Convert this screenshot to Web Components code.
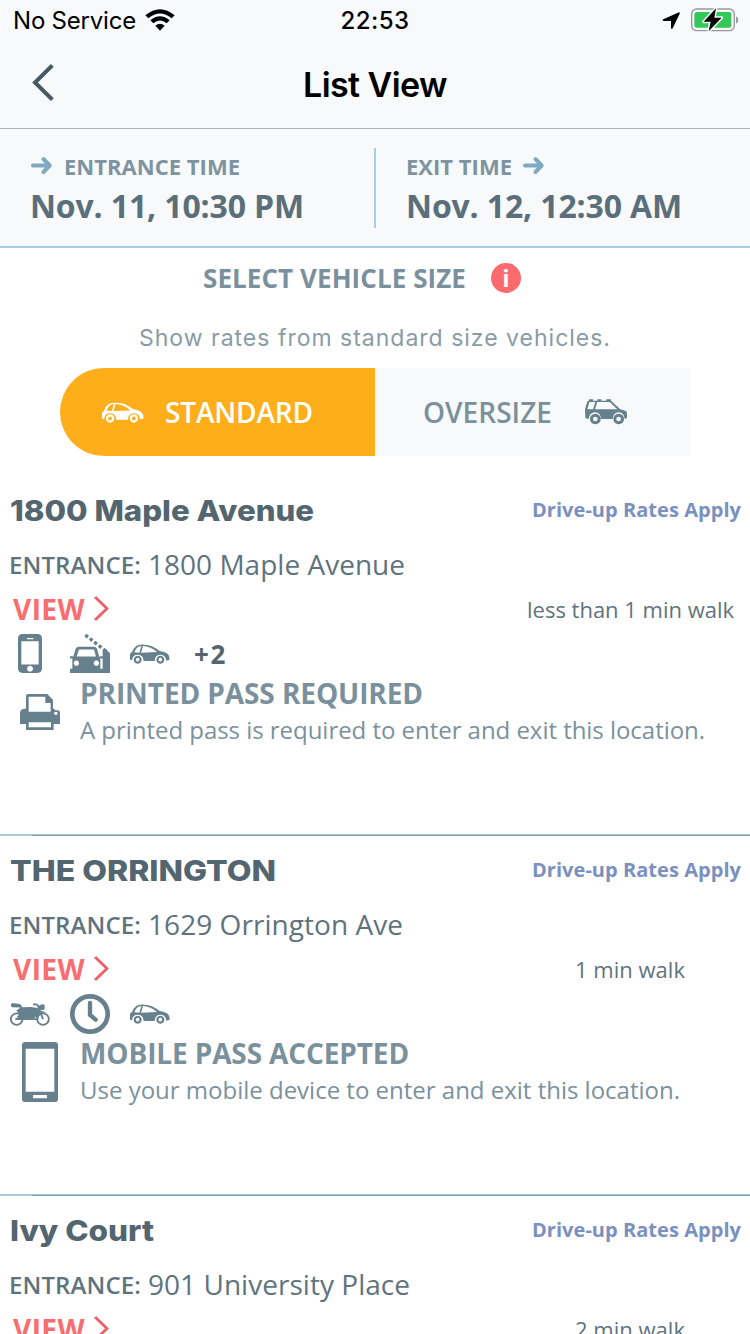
<!DOCTYPE html>
<html lang="en">
<head>
<meta charset="utf-8">
<title>List View</title>
<style>
html,body{margin:0;height:1334px;overflow:hidden;background:#fff}
</style>
</head>
<body>
<parking-app></parking-app>
<script>
const define = (name, html, setup) => customElements.define(name, class extends HTMLElement {
  connectedCallback() {
    if (this.shadowRoot) return;
    const root = this.attachShadow({ mode: 'open' });
    const t = document.createElement('template');
    t.innerHTML = typeof html === 'function' ? html(this) : html;
    root.append(t.content.cloneNode(true));
    if (setup) setup(this, root);
  }
});

/* Text tracked (or, with "stretch", widened) to a given advance width */
define('fit-text', `<style>:host{display:block;white-space:pre;flex:none}span{display:inline-block;transform-origin:0 50%}</style><span><slot></slot></span>`,
  (el, root) => {
    const w = +el.getAttribute('w');
    if (!w || !el.textContent) return;
    const span = root.querySelector('span');
    const natural = span.getBoundingClientRect().width;
    if (el.hasAttribute('stretch')) {
      span.style.transform = `scaleX(${(w / natural).toFixed(4)})`;
      el.style.width = w + 'px';
    } else {
      span.style.letterSpacing = ((w - natural) / el.textContent.length).toFixed(3) + 'px';
    }
  });

const car = `<path fill-rule="evenodd" d="M0 30Q3 26 6 24Q10 13 19 6Q29 1 43 2Q69 3 89 21Q106 23 114 31Q119 36 119 47L109 50Q107 32 91 32Q75 32 74 51L41 51Q40 32 23 32Q7 32 6 49L0 47Z
M13 25L28 26L34 6Q20 6 13 25ZM39 6L33 26L81 24Q62 7 39 6Z"/><path fill-rule="evenodd" d="M23 35a12 12 0 1 0 .1 0ZM23 41.500a5.500 5.500 0 1 1-.1 0ZM91 35a12 12 0 1 0 .1 0ZM91 41.500a5.500 5.500 0 1 1-.1 0Z"/>`;
const icons = {
  wifi: ['0 0 90 66', `<path d="M1 19Q45-17 89 19L80 28Q45-1 10 28ZM16 34Q45 9 74 34L65 43Q45 26 25 43ZM31 50Q45 39 59 50L45 65Z"/>`],
  location: ['0 0 54 54', `<path d="M51 1Q54 1 53 5L32 49Q29 54 27 48V27H5Q-1 25 4 22Z"/>`],
  battery: ['0 0 144 72', `<rect x="2" y="3" width="128" height="65" rx="15" fill="none" stroke="#98999c" stroke-width="4"/><path fill="#98999c" d="M135 25Q142 29 142 36T135 47Z"/><rect x="10" y="12" width="111" height="47" rx="8" fill="#34c759"/><path fill="#000" stroke="#f8f9fb" stroke-width="9" stroke-linejoin="round" paint-order="stroke" d="M75 1L38 41H59L53 70L92 29H70Z"/>`],
  back: ['0 0 66 112', `<path fill="none" stroke="#475963" stroke-width="12" d="M61 4L9 56L61 108"/>`],
  next: ['0 0 44 76', `<path fill="none" stroke="#f0606a" stroke-width="8.500" d="M3 3L38 38L3 73"/>`],
  arrow: ['0 0 64 50', `<path fill="none" stroke="#7ea9c1" stroke-width="12" stroke-linecap="round" stroke-linejoin="round" d="M6 25H56M38 6L57 25L38 44"/>`],
  car: ['0 0 120 60', car],
  suv: ['0 0 126 78', `<path fill-rule="evenodd" d="M0 31L7 7Q10 6 12 5V1H24V5H37V1H49V5H64V1H78V5L106 31L121 35Q126 37 126 44V57L119 60Q117 40 101 40Q85 40 83 60H48Q47 40 30 40Q14 40 11 60L1 58ZM7 31H24L31 9H13ZM30 31H50V31H97L74 9H37Z"/><path fill-rule="evenodd" d="M31 44a16 16 0 1 0 .1 0ZM31 53a7 7 0 1 1-.1 0ZM101 44a16 16 0 1 0 .1 0ZM101 53a7 7 0 1 1-.1 0Z"/>`],
  phone: ['0 0 72 118', `<path fill-rule="evenodd" d="M14 0H58Q72 0 72 14V104Q72 118 58 118H14Q0 118 0 104V14Q0 0 14 0ZM10 22V92H62V22ZM36 96a9 9 0 1 0 .1 0ZM27 12V16H46V12Z"/>`],
  gate: ['0 0 120 116', `<path fill-rule="evenodd" d="M26 38H72Q78 38 81 44L88 68Q91 72 91 78V116H75V106H23V116H7V78Q6 71 10 67L17 44Q20 38 26 38ZM27 46L20 67H78L72 46ZM19 79a8 8 0 1 0 .1 0ZM79 79a8 8 0 1 0 .1 0Z"/><path d="M0 66H9V73H0ZM89 66H98V73H89ZM0 103H120V116H0ZM98 51L108 45L120 57V116H98Z"/><path fill="none" stroke="currentColor" stroke-width="10" stroke-dasharray="10 7" d="M46 3L112 54"/>`],
  printer: ['0 0 120 108', `<path fill-rule="evenodd" d="M26 0H82L99 18V44H104V49H114Q120 50 120 57V90H101V108H18V90H0V57Q0 46 12 44H18V7Q18 0 26 0ZM26 8V53H92V27H76V8ZM26 85V100H93V85ZM103 54V62H112V54Z"/>`],
  moto: ['0 0 120 70', `<g fill="none" stroke="currentColor" stroke-width="5.500"><circle cx="20" cy="49" r="17.500"/><circle cx="99" cy="49" r="17.500"/><path d="M69 4H79Q84 5 86 15L99 49M20 49H82L88 21"/></g><path d="M3 4Q4 0 12 1L29 3Q35 5 37 13L64 12L89 17L81 34L73 48H30L20 43L28 34L19 23L32 14L6 13Q2 11 3 4ZM84 10L96 4L104 5V20L92 22ZM16 46L38 42V51L16 52ZM76 34Q94 16 108 31L98 29Q85 32 79 48Z"/>`],
  clock: ['0 0 120 120', `<circle cx="60" cy="60" r="53" fill="none" stroke="currentColor" stroke-width="14"/><path d="M60 27V63L77 77" fill="none" stroke="currentColor" stroke-width="13" stroke-linecap="round"/>`],
  mobile: ['0 0 108 180', `<path fill-rule="evenodd" d="M10 0H98Q108 0 108 10V170Q108 180 98 180H10Q0 180 0 170V10Q0 0 10 0ZM11 20V149H97V20ZM33 159V169H75V159Z"/>`]
};
define('app-icon', el => {
  const [box, art] = icons[el.getAttribute('name')];
  return `<style>:host{display:block;flex:none}svg{display:block;width:100%;height:100%;fill:currentColor;overflow:visible}</style><svg viewBox="${box}" preserveAspectRatio="none">${art}</svg>`;
});

define('status-bar', `<style>
:host{display:grid;grid-template-columns:1fr auto 1fr;align-items:center;height:40px;line-height:42px;font-family:Inter,sans-serif;font-size:24px;color:#000}
.left{display:flex;align-items:center;padding-left:13px;gap:9px;height:40px}
.right{display:flex;align-items:center;justify-content:flex-end;padding-right:11px;gap:11px;height:40px}
.clock{font-weight:500;height:40px}
.left fit-text{height:40px}
</style>
<div class="left"><fit-text w="123">No Service</fit-text><app-icon name="wifi" style="width:30px;height:22px"></app-icon></div>
<fit-text class="clock" w="69">22:53</fit-text>
<div class="right"><app-icon name="location" style="width:18px;height:18px;margin-top:1px"></app-icon><app-icon name="battery" style="width:48px;height:24px"></app-icon></div>`);

define('nav-bar', el => `<style>
:host{display:grid;grid-template-columns:1fr auto 1fr;align-items:center;height:88px;border-bottom:1px solid #aeb0b2;font:600 34px/88px Inter,sans-serif;color:#000}
app-icon{width:22px;height:37px;margin-left:32px;margin-top:-3px}
fit-text{height:87px}
</style><app-icon name="back"></app-icon><fit-text w="144">${el.getAttribute('heading')}</fit-text><span></span>`);

define('time-slot', el => `<style>
:host{display:block}
.label{display:flex;align-items:center;height:30px;font-size:22px;line-height:30px;font-weight:700;color:#7d94a0}
.date{font-size:32px;font-weight:700;line-height:50px;color:#5b6f7b}
app-icon{width:21px;height:17px;margin-top:-2px}
.before{margin-right:12px;margin-left:1px}.after{margin-left:11px}
</style>
<div class="label">${el.hasAttribute('exit') ? '' : '<app-icon class="before" name="arrow"></app-icon>'}<fit-text w="${el.getAttribute('lw')}">${el.getAttribute('label')}</fit-text>${el.hasAttribute('exit') ? '<app-icon class="after" name="arrow"></app-icon>' : ''}</div>
<fit-text class="date" w="${el.getAttribute('dw')}">${el.getAttribute('date')}</fit-text>`);

define('time-range', `<style>
:host{display:grid;grid-template-columns:374px 2px 374px;height:117px;border-bottom:2px solid #a9cfe4}
time-slot{padding:22px 0 0 30px}
time-slot[exit]{padding-left:30px}
i{height:80px;margin-top:19px;background:#a9cfe4}
</style>
<time-slot label="ENTRANCE TIME" lw="176" date="Nov. 11, 10:30 PM" dw="274"></time-slot><i></i>
<time-slot exit label="EXIT TIME" lw="106" date="Nov. 12, 12:30 AM" dw="276"></time-slot>`);

define('vehicle-size', `<style>
:host{display:block}
.head{display:flex;align-items:center;height:60px;padding-left:203px;gap:23px;font-size:26px;font-weight:700;color:#7a919d}
.info{display:grid;place-items:center;width:30px;height:30px;margin-left:2px;border-radius:50%;background:#fb6b6e;color:#fff;font:700 24px/30px "Open Sans",sans-serif}
.sub{display:flex;justify-content:center;height:60px;font:400 23px/60px Inter,sans-serif;color:#879ca7}
.toggle{display:grid;grid-template-columns:1fr 1fr;height:88px;margin:0 60px;font-size:28px;font-weight:600}
.toggle div{display:flex;align-items:center}
.standard{background:#ffae1b;color:#fff;border-radius:44px 0 0 44px;padding-left:42px;gap:21px}
.oversize{background:#f8f9fb;color:#7a919d;padding-left:48px;gap:33px}
.oversize app-icon{color:#66808d}
</style>
<div class="head"><fit-text w="263">SELECT VEHICLE SIZE</fit-text><span class="info">i</span></div>
<div class="sub"><fit-text w="472">Show rates from standard size vehicles.</fit-text></div>
<div class="toggle">
<div class="standard"><app-icon name="car" style="width:42px;height:21px"></app-icon><fit-text w="148">STANDARD</fit-text></div>
<div class="oversize"><fit-text w="129">OVERSIZE</fit-text><app-icon name="suv" style="width:42px;height:26px"></app-icon></div>
</div>`);

define('location-card', el => {
  const a = n => el.getAttribute(n);
  return `<style>
:host{display:block;box-sizing:border-box;height:360px;color:#5f737e}
.row{display:flex;justify-content:space-between;align-items:center}
.title{height:68px;padding:0 9px 0 10px}
.name{font:800 29px/68px Inter,sans-serif;color:#53656f;padding-top:2px}
.rate{font-size:20px;font-weight:700;color:#7a90c0;margin-top:-2px}
.entrance{height:42px;justify-content:flex-start;padding-left:9px;line-height:42px}
.entrance .key{font-size:24px;font-weight:600;margin-right:7px}
.entrance .value{font-size:28px;margin-top:-3px}
.view{height:46px;padding-left:13px}
.view .link{display:flex;align-items:center;gap:9px;font-size:28px;font-weight:700;line-height:46px;color:#f76d72}
.link app-icon{width:15px;height:25px;margin-top:-1px}
.walk{font-size:22px}
.features{display:flex;align-items:center;height:44px;padding-left:10px;gap:20px;color:#66808d}
.pass{display:grid;grid-template-columns:80px 1fr;color:#66808d}
.kind{font-size:28px;font-weight:700;line-height:34px;color:#7a919d}
.desc{font-size:24px;line-height:40px;color:#7a919d}
hr{margin:84px 0 0;border:0;height:2px;background:linear-gradient(#a9cfda,#a9cfda) 0 0/32px 2px no-repeat,linear-gradient(#a9c9d3 1px,#7c9fb0 1px)}
</style>
<div class="row title"><fit-text class="name" stretch w="${a('nw')}">${a('name')}</fit-text><fit-text class="rate" w="209">Drive-up Rates Apply</fit-text></div>
<div class="row entrance"><fit-text class="key" w="132">ENTRANCE:</fit-text><fit-text class="value" w="${a('aw')}">${a('address')}</fit-text></div>
<div class="row view"><div class="link"><fit-text w="72">VIEW</fit-text><app-icon name="next"></app-icon></div><fit-text class="walk" w="${a('ww')}" style="margin-right:${a('wr')}px">${a('walk')}</fit-text></div>
${a('kind') ? `<div class="features"><slot name="feature"></slot></div>
<div class="pass"><slot name="pass"></slot><div><fit-text class="kind" w="${a('kw')}">${a('kind')}</fit-text><fit-text class="desc" w="${a('dw')}">${a('desc')}</fit-text></div></div>
<hr>` : ''}`;
});

define('parking-app', `<style>
:host{display:block;width:750px;height:1334px;overflow:hidden;background:#fff;font-family:"Open Sans",sans-serif}
header{background:#f8f9fb}
main{padding-top:20px}
.plus{font-size:26px;font-weight:700;line-height:44px;color:#53656f;margin-left:4px}
</style>
<header><status-bar></status-bar><nav-bar heading="List View"></nav-bar><time-range></time-range></header>
<vehicle-size></vehicle-size>
<main>
<location-card name="1800 Maple Avenue" nw="304" address="1800 Maple Avenue" aw="257" walk="less than 1 min walk" ww="207" wr="16" kind="PRINTED PASS REQUIRED" kw="343" desc="A printed pass is required to enter and exit this location." dw="625">
<app-icon slot="feature" name="phone" style="width:24px;height:39px;margin:-1px 8px 0"></app-icon>
<app-icon slot="feature" name="gate" style="width:40px;height:39px;margin-top:-2px"></app-icon>
<app-icon slot="feature" name="car" style="width:40px;height:20px"></app-icon>
<fit-text slot="feature" class="plus" w="33">+2</fit-text>
<app-icon slot="pass" name="printer" style="width:40px;height:36px;margin:18px 0 0 20px"></app-icon>
</location-card>
<location-card name="THE ORRINGTON" nw="266" address="1629 Orrington Ave" aw="255" walk="1 min walk" ww="110" wr="65" kind="MOBILE PASS ACCEPTED" kw="329" desc="Use your mobile device to enter and exit this location." dw="600">
<app-icon slot="feature" name="moto" style="width:40px;height:23px"></app-icon>
<app-icon slot="feature" name="clock" style="width:40px;height:40px"></app-icon>
<app-icon slot="feature" name="car" style="width:40px;height:20px"></app-icon>
<app-icon slot="pass" name="mobile" style="width:36px;height:60px;margin:6px 0 0 22px"></app-icon>
</location-card>
<location-card name="Ivy Court" nw="144" address="901 University Place" aw="262" walk="2 min walk" ww="110" wr="65"></location-card>
</main>`);
</script>
</body>
</html>
